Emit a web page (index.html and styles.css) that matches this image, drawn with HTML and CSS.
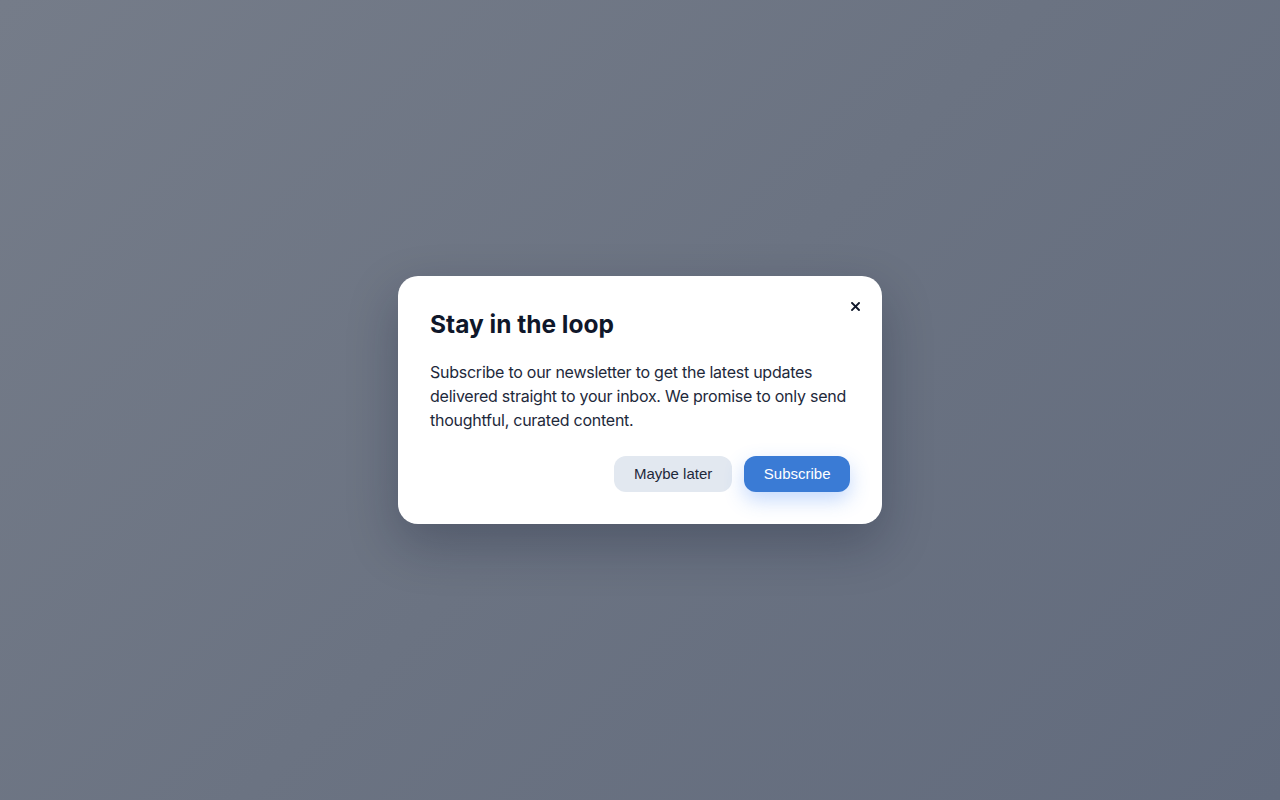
FILE: index.html
```html
<!DOCTYPE html>
<html lang="en">
<head>
<meta charset="utf-8">
<title>Stay in the loop</title>
<link rel="stylesheet" href="styles.css">
</head>
<body>
<div class="backdrop">
  <div class="modal" role="dialog" aria-labelledby="t">
    <button class="close" aria-label="Close">
      <svg width="9" height="9" viewBox="0 0 9 9"><path d="M1 1L8 8M8 1L1 8" stroke="#0f172a" stroke-width="1.9" stroke-linecap="square"/></svg>
    </button>
    <h2 id="t" class="title">Stay in the loop</h2>
    <p class="text">Subscribe to our newsletter to get the latest updates delivered straight to your inbox. We promise to only send thoughtful, curated content.</p>
    <div class="actions">
      <button class="btn btn-secondary">Maybe later</button>
      <button class="btn btn-primary">Subscribe</button>
    </div>
  </div>
</div>
</body>
</html>
```

FILE: styles.css
```css
html, body {
  margin: 0;
  height: 100%;
}
body {
  font-family: Inter, "Noto Sans", sans-serif;
}
.backdrop {
  height: 100%;
  background: linear-gradient(135deg, #757c89 0%, #6b7382 50%, #626b7d 100%);
  display: flex;
  align-items: center;
  justify-content: center;
}
.modal {
  position: relative;
  width: 484px;
  box-sizing: border-box;
  padding: 32px;
  background: #ffffff;
  border-radius: 20px;
  box-shadow: 0 20px 50px rgba(15, 23, 42, 0.28);
}
.close {
  position: absolute;
  top: 18px;
  right: 15px;
  width: 24px;
  height: 24px;
  padding: 0;
  border: 0;
  background: transparent;
  display: flex;
  align-items: center;
  justify-content: center;
  cursor: pointer;
}
.title {
  margin: 0 0 20px;
  font-size: 24.5px;
  line-height: 32px;
  font-weight: 700;
  color: #0f172a;
  letter-spacing: 0;
}
.text {
  margin: 0 0 24px;
  font-size: 16px;
  line-height: 24px;
  color: #1e293b;
  letter-spacing: -0.25px;
}
.actions {
  display: flex;
  justify-content: flex-end;
  gap: 12px;
}
.btn {
  height: 36px;
  padding: 0 20px 2px;
  border: 0;
  border-radius: 12px;
  font-family: "Liberation Sans", Arial, sans-serif;
  font-size: 15px;
  cursor: pointer;
}
.btn-secondary {
  background: #e2e8f0;
  color: #1e293b;
}
.btn-primary {
  padding: 0 19.5px 2px;
  background: #3a7bd5;
  color: #ffffff;
  box-shadow: 0 8px 20px rgba(59, 130, 246, 0.3);
}
```
